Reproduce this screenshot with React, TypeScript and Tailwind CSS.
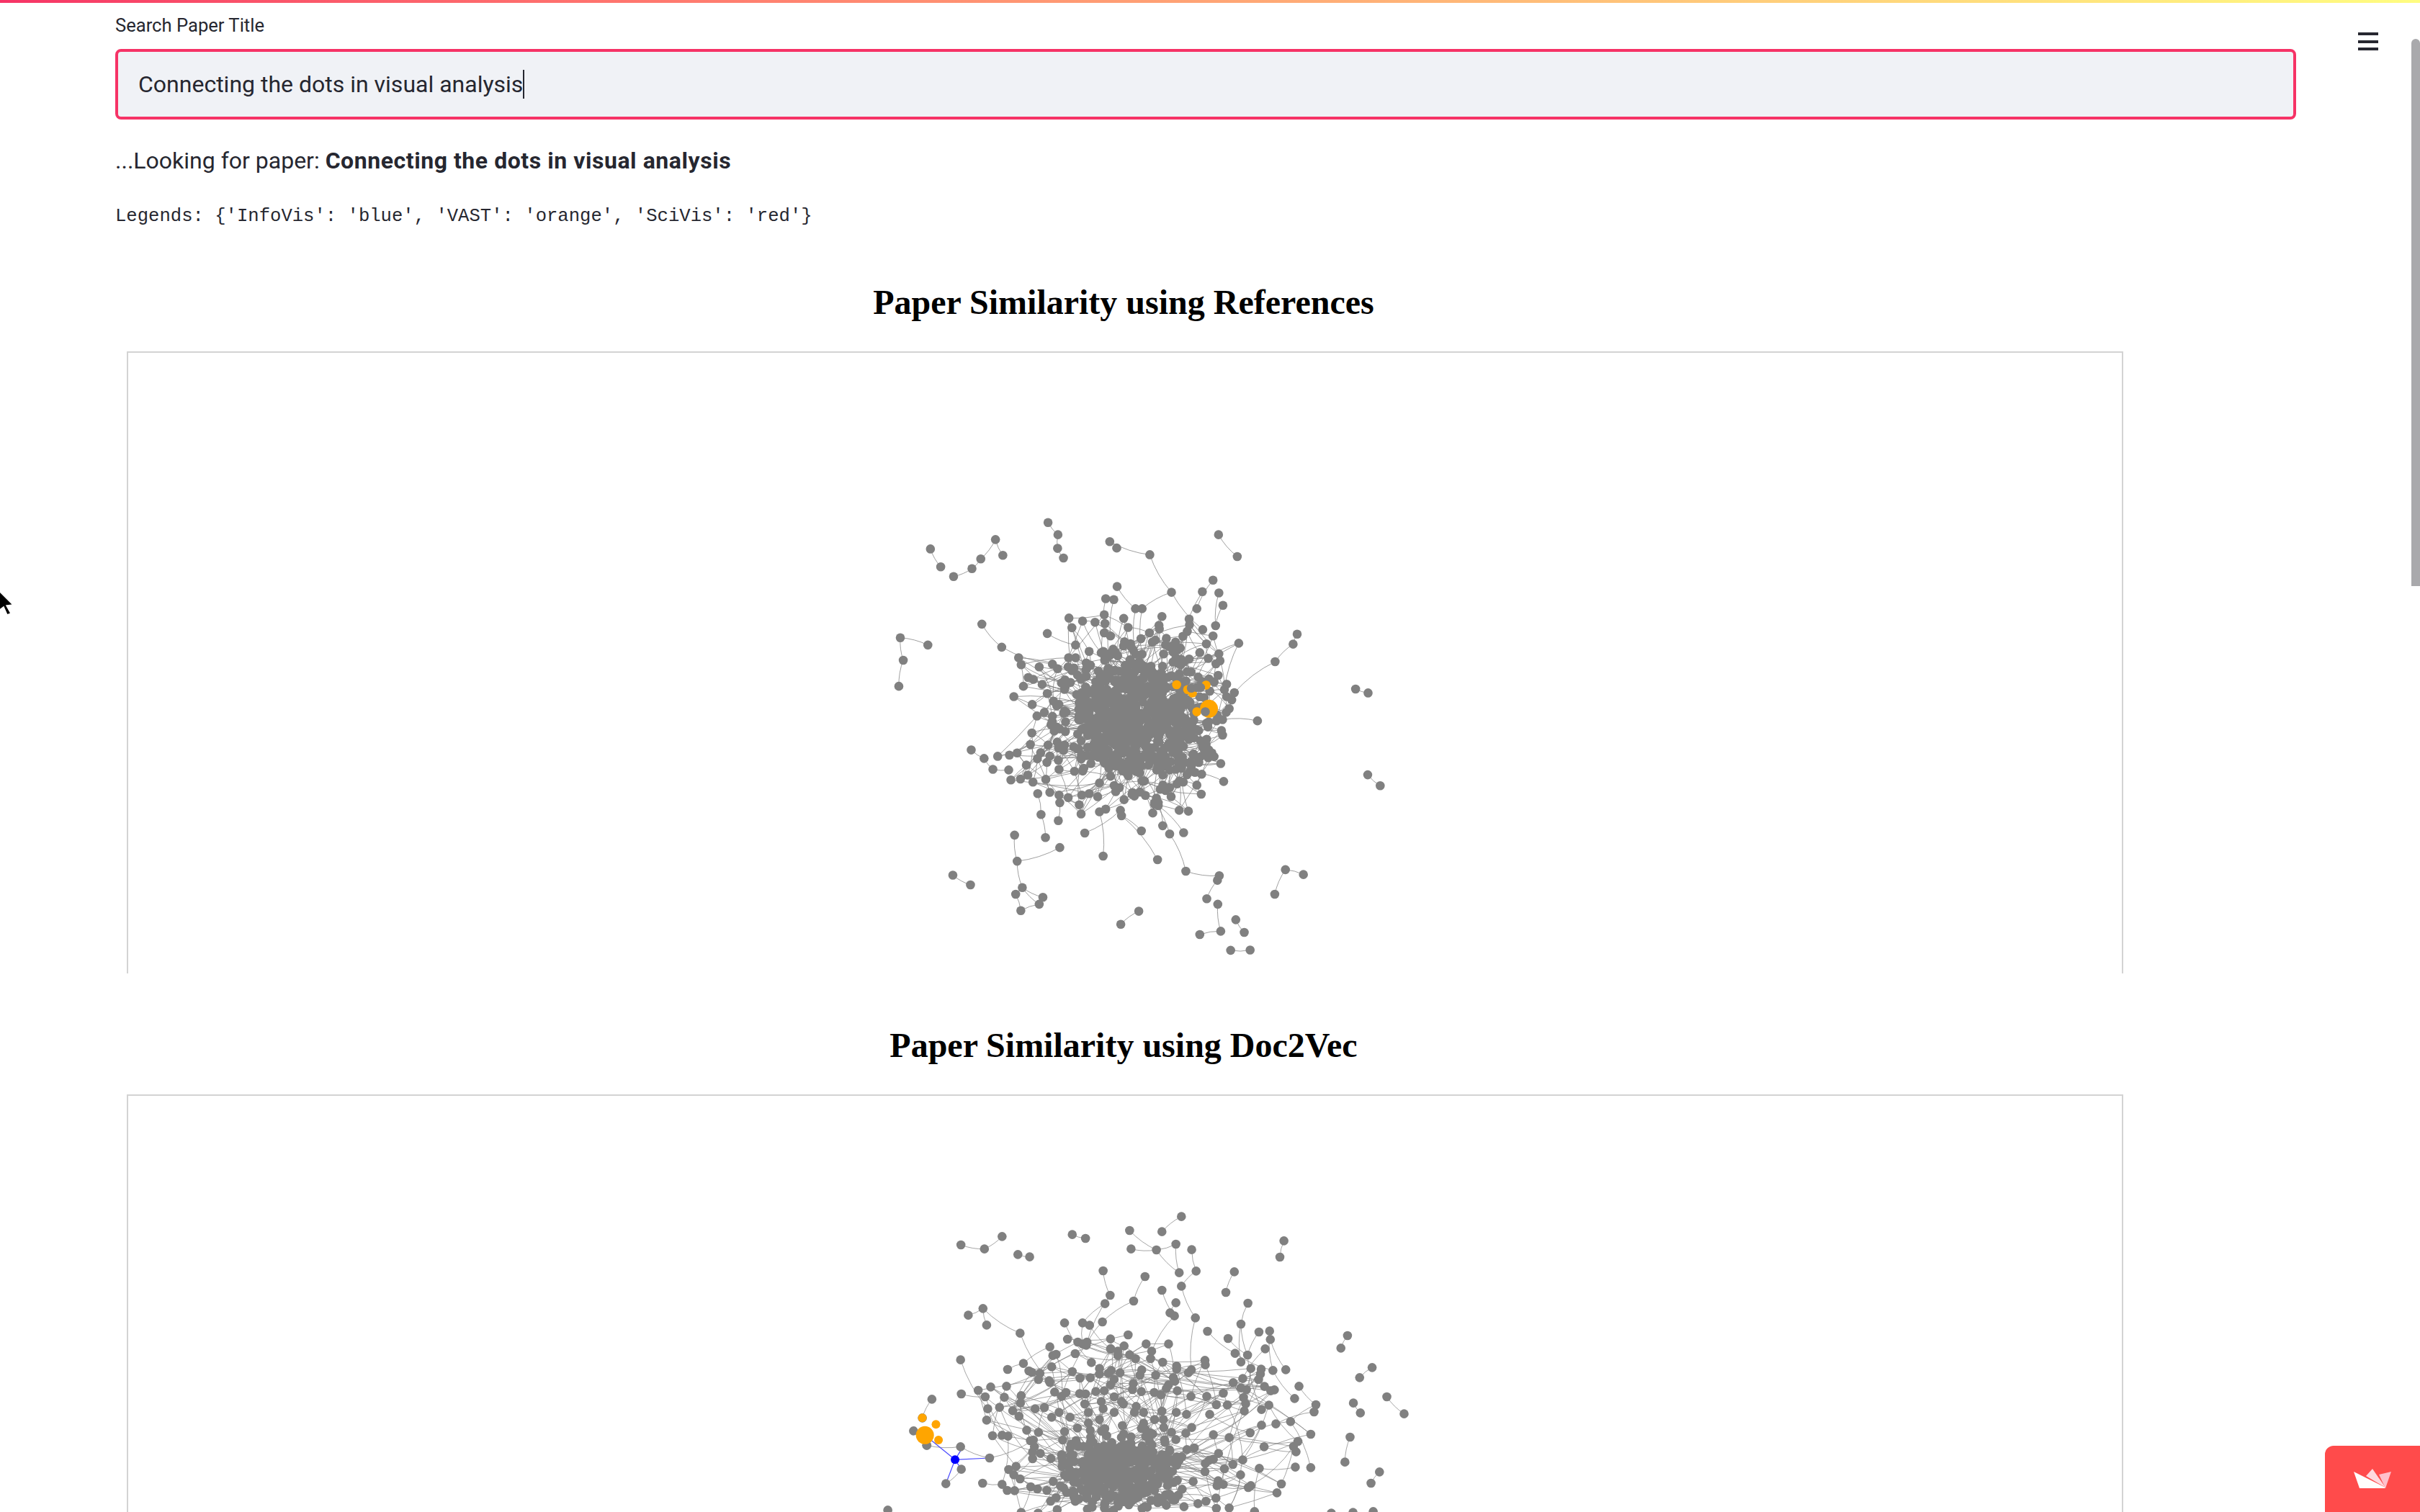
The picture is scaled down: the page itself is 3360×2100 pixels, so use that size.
import React from "react";

type P = [number, number];

function rng(seed: number) {
  let s = seed;
  return () => {
    s = (s * 1664525 + 1013904223) % 4294967296;
    return s / 4294967296;
  };
}

const chains1: P[][] = [
  [[180,153],[208,212]],
  [[243,244],[293,218],[317,186],[357,122],[377,174]],
  [[500,66],[527,106],[526,151],[542,183]],
  [[687,150],[668,129],[777,172],[836,296],[756,350]],
  [[836,296],[921,419]],
  [[688,277],[738,350]],
  [[964,106],[1015,178]],
  [[173,470],[98,446],[106,520],[94,606]],
  [[320,401],[374,477],[512,533]],
  [[949,256],[905,350]],
  [[965,298],[956,406]],
  [[976,339],[956,406]],
  [[1178,434],[1167,467],[1118,525],[1007,627]],
  [[1337,615],[1371,628]],
  [[1370,898],[1404,934]],
  [[1070,720],[975,716]],
  [[291,816],[326,844],[350,880],[393,882]],
  [[409,1097],[416,1183],[532,1138]],
  [[416,1183],[430,1270],[412,1292]],
  [[430,1270],[486,1302],[476,1325],[426,1346],[412,1292]],
  [[430,1270],[476,1325]],
  [[241,1229],[289,1261]],
  [[600,1090],[697,1015]],
  [[650,1166],[640,1020]],
  [[798,1178],[700,1033]],
  [[754,1083],[700,1033]],
  [[812,1066],[800,990]],
  [[875,1216],[831,1093],[790,990]],
  [[875,1216],[966,1231]],
  [[961,1246],[932,1307]],
  [[869,1089],[800,1000]],
  [[1195,1227],[1146,1211],[1117,1292]],
  [[962,1325],[970,1414],[913,1425]],
  [[1011,1376],[1034,1418]],
  [[997,1477],[1050,1476]],
  [[747,1348],[698,1391]],
  [[493,1105],[481,1029],[472,960]],
  [[528,1049],[532,990]],
  [[657,317],[653,430]],
  [[679,320],[670,440]],
  [[738,350],[738,500]],
  [[756,350],[756,500]],
  [[920,294],[860,480]],
  [[498,432],[575,470]],
  [[978,920],[900,890]],
];
const extra1: P[] = [
  [557,381],[565,413],[594,391],[628,395],[653,370],[706,382],[718,412],[655,399],[776,430],[810,376],[802,405],[803,417],[822,448],[753,449],[792,454],[847,460],[849,480],[884,384],[885,403],[879,425],[867,441],[949,440],[931,466],[913,495],[965,499],[968,522],[957,532],[936,514],[884,516],[862,517],[840,526],[1019,464],[963,570],[938,582],[986,599],[952,592],[980,617],[1000,651],[986,640],[993,680],[985,692],[960,700],[935,740],[972,752],[975,767],[910,752],[897,776],[920,792],[930,800],[946,826],[952,838],[936,842],[915,838],[890,870],[918,896],[868,922],[851,928],[848,880],[827,860],[917,962],[905,932],[970,861],[857,1015],[882,1018],
  [420,512],[427,535],[476,542],[526,548],[555,542],[575,512],[556,512],[446,577],[460,583],[433,606],[484,600],[498,630],[407,640],[457,666],[490,692],[470,704],[515,655],[512,705],[508,733],[522,740],[456,760],[452,798],[500,800],[525,790],[480,825],[471,845],[497,857],[505,836],[528,850],[530,880],[363,837],[395,833],[416,826],[441,866],[399,915],[425,912],[445,899],[459,922],[494,913],[505,956],[530,965],[555,973],[585,997],[590,1027],[635,970],[612,960],[592,965],[657,1011],[707,980],[735,968],[765,966],[795,975],[790,995],[785,1024],[835,970],[820,950],
];

const chains2: P[][] = [
  [[263,207],[327,224],[375,172]],
  [[418,247],[450,257]],
  [[566,164],[602,180]],
  [[722,147],[795,228],[857,323]],
  [[726,224],[795,228],[848,204],[857,323]],
  [[863,89],[810,152]],
  [[891,227],[903,316],[863,379],[901,511],[890,728]],
  [[1142,190],[1131,258]],
  [[650,315],[669,417]],
  [[655,452],[594,532]],
  [[669,417],[604,625]],
  [[764,339],[733,441],[648,528],[604,625]],
  [[810,396],[844,503],[782,650]],
  [[848,448],[832,490]],
  [[1007,319],[984,405]],
  [[1044,450],[1025,537],[1043,666]],
  [[1025,537],[1025,695]],
  [[283,500],[323,472],[424,575],[505,780]],
  [[323,472],[333,541]],
  [[545,532],[618,697]],
  [[594,532],[594,620]],
  [[613,542],[670,640]],
  [[934,567],[1009,659],[1112,730],[1171,847]],
  [[990,597],[1043,666]],
  [[1074,570],[1043,666],[1081,893]],
  [[1103,566],[1112,730]],
  [[1105,601],[1147,727]],
  [[1091,640],[1030,764]],
  [[1315,585],[1297,637]],
  [[1382,718],[1348,760]],
  [[1422,840],[1469,911]],
  [[1331,866],[1350,907]],
  [[1322,1008],[1308,1112]],
  [[1402,1153],[1379,1200]],
  [[262,686],[336,890],[375,1000]],
  [[264,828],[329,840],[391,1004]],
  [[170,1042],[262,1048],[341,1095],[460,1020]],
  [[222,1202],[264,1142]],
  [[322,1200],[375,1205],[391,1004]],
  [[1229,873],[1160,943],[1050,990],[950,1100]],
  [[1224,903],[1120,953]],
  [[1183,796],[1229,873]],
  [[1215,1135],[1160,943]],
  [[1088,1048],[1175,1069]],
  [[1075,1138],[1062,1318]],
  [[1075,1138],[1173,1133]],
  [[940,913],[1050,990]],
  [[553,600],[718,582]],
  [[505,632],[433,701],[390,726]],
  [[184,850],[158,928]],
];
const extra2: P[] = [
  [310,813],[344,799],[581,612],[606,612],[670,599],[574,660],[513,668],[522,663],[510,715],[448,732],[456,738],[478,742],[474,768],[503,773],[566,735],[587,762],[615,761],[671,640],[690,650],[690,668],[707,628],[722,665],[738,681],[767,620],[779,681],[812,696],[828,620],[850,712],[850,725],[927,688],[928,707],[882,740],[755,728],[750,750],[793,750],[841,760],[845,775],[828,790],[822,805],[852,815],[807,832],[789,822],[754,818],[732,785],[730,810],[696,740],[672,730],[640,722],[640,745],[664,742],[680,767],[670,790],[653,815],[630,818],[602,828],[586,827],[549,822],[537,838],[518,820],[387,796],[381,842],[427,835],[425,866],[368,884],[404,898],[421,921],[333,937],[349,1002],[442,979],[474,988],[452,1023],[463,1048],[458,1070],[479,1076],[458,1098],[508,1097],[537,1081],[413,1130],[393,1143],[407,1165],[424,1182],[389,1230],[409,1231],[453,1215],[471,1224],[497,1230],[514,1193],[534,1212],[522,1260],[507,1275],[525,1310],[427,1322],[473,1325],
  [889,838],[932,838],[977,825],[1004,781],[1052,722],[1080,725],[1078,745],[1073,768],[1089,797],[1025,803],[1040,810],[1106,815],[1116,811],[1032,843],[1038,869],[988,874],[958,873],[1034,899],[1101,875],[1081,958],[993,1010],[950,998],[891,968],[1215,996],[1180,1026],[1168,1047],[964,1076],[1030,1103],[1003,1122],[980,1140],[938,1105],[928,1118],[927,1152],[1024,1165],[1135,1203],[1123,1240],[1052,1210],[1045,1218],[977,1205],[960,1210],[963,1190],[895,1193],[957,1262],[930,1275],[908,1285],[993,1303],[958,1305],[870,1298],[840,1270],
  [877,913],[849,905],[814,935],[815,968],[785,995],[836,988],[848,1018],[875,992],[817,1020],[878,1060],[898,1053],[864,1090],[850,1125],[822,1140],[825,1170],[825,1210],[842,1197],[865,1225],[855,1250],[830,1245],[845,1270],[822,1292],
  [700,860],[740,880],[760,905],[650,890],[610,905],[545,985],[580,970],[615,980],[560,925],[510,925],[530,905],[465,890],[490,885],[600,870],[645,860],[680,840],[705,870],[735,905],[680,905],[640,935],[610,950],[760,950],[790,935],[810,900],[580,1040],[560,1055],[540,1020],[565,1110],[545,1165],[570,1195],[590,1225],[570,1245],[605,1262],[655,1282],[690,1280],[720,1290],[770,1300],[800,1260],[790,1230],[620,1300],
];
const farOnly2: P[] = [[64,1312],[1271,1325],[1330,1322],[1385,1318]];

type Graph = {
  chains: P[][];
  extra: P[];
  far: P[];
  sx: number;
  sy: number;
  oy: number;
  cx: number;
  cy: number;
  rx: number;
  ry: number;
  core: number;
  dense: number;
  denseK: number;
  seed: number;
};

function build(g: Graph) {
  const r = rng(g.seed);
  const map = (p: P): P => [1200 + p[0] / g.sx, g.oy + p[1] / g.sy];
  const corePts: P[] = [];
  for (let i = 0; i < g.core; i++) {
    const a = r() * Math.PI * 2;
    const d = Math.pow(r(), 0.55);
    corePts.push([g.cx + Math.cos(a) * d * g.rx, g.cy + Math.sin(a) * d * g.ry]);
  }
  for (let i = 0; i < g.dense; i++) {
    const a = r() * Math.PI * 2;
    const d = Math.pow(r(), 0.55) * g.denseK;
    corePts.push([g.cx + Math.cos(a) * d * g.rx, g.cy + Math.sin(a) * d * g.ry]);
  }
  const paths: string[] = [];
  const curve = (a: P, b: P, k: number) => {
    const A = map(a);
    const B = map(b);
    const mx = (A[0] + B[0]) / 2 - (B[1] - A[1]) * k;
    const my = (A[1] + B[1]) / 2 + (B[0] - A[0]) * k;
    return `M${A[0].toFixed(1)} ${A[1].toFixed(1)}Q${mx.toFixed(1)} ${my.toFixed(1)} ${B[0].toFixed(1)} ${B[1].toFixed(1)}`;
  };
  g.chains.forEach((c) => {
    for (let i = 0; i < c.length - 1; i++) paths.push(curve(c[i], c[i + 1], 0.1));
  });
  const inner = [...corePts, ...g.extra];
  const norm = (p: P) => Math.hypot((p[0] - g.cx) / g.rx, (p[1] - g.cy) / g.ry);
  inner.forEach((p) => {
    const dp = norm(p);
    const near = inner
      .filter((q) => q !== p && norm(q) < dp)
      .map((q) => ({ q, d: Math.hypot(q[0] - p[0], q[1] - p[1]) }))
      .sort((a, b) => a.d - b.d);
    if (near.length === 0) return;
    for (let j = 0; j < 3; j++) {
      const idx = Math.floor(r() * Math.min(near.length, j === 0 ? 6 : 40));
      paths.push(curve(p, near[idx].q, (r() - 0.5) * 0.25));
    }
  });
  const pts: P[] = [];
  const seen = new Set<string>();
  [...g.chains.flat(), ...g.extra, ...g.far, ...corePts].forEach((p) => {
    const k = p.join(",");
    if (!seen.has(k)) {
      seen.add(k);
      pts.push(map(p));
    }
  });
  return { d: paths.join(""), pts };
}

const g1 = build({ chains: chains1, extra: extra1, far: [], sx: 1.96, sy: 2.375, oy: 698, cx: 735, cy: 708, rx: 225, ry: 260, core: 300, dense: 420, denseK: 0.72, seed: 7 });
const g2 = build({ chains: chains2, extra: extra2, far: farOnly2, sx: 1.96, sy: 3, oy: 1660, cx: 700, cy: 1150, rx: 175, ry: 190, core: 170, dense: 200, denseK: 0.65, seed: 21 });

const m1 = (x: number, y: number): P => [1200 + x / 1.96, 698 + y / 2.375];
const m2 = (x: number, y: number): P => [1200 + x / 1.96, 1660 + y / 3];

function Dot({ p, r, fill }: { p: P; r: number; fill: string }) {
  return <circle cx={p[0]} cy={p[1]} r={r} fill={fill} />;
}

function Graph1() {
  const on: P[] = [[890, 612], [905, 610], [928, 690], [915, 610]];
  return (
    <svg className="block w-full h-full" viewBox="178 490 2768 862" preserveAspectRatio="xMinYMin slice">
      <path d={g1.d} fill="none" stroke="#808080" strokeOpacity={0.75} strokeWidth={1} />
      {g1.pts.map((p, i) => (
        <Dot key={i} p={p} r={6.3} fill="#808080" />
      ))}
      <Dot p={m1(850, 601)} r={6.3} fill="#ffa500" />
      <Dot p={m1(880, 617)} r={6.3} fill="#ffa500" />
      <Dot p={m1(893, 628)} r={6.3} fill="#ffa500" />
      <Dot p={m1(930, 602)} r={6.3} fill="#ffa500" />
      <Dot p={m1(905, 690)} r={6.3} fill="#ffa500" />
      <Dot p={m1(938, 680)} r={12.5} fill="#ffa500" />
      {on.map((q, i) => (
        <Dot key={i} p={m1(q[0], q[1])} r={6.3} fill="#808080" />
      ))}
    </svg>
  );
}

function Graph2() {
  const blue = m2(247, 1102);
  const bl: P[] = [m2(165, 1000), m2(341, 1095), m2(264, 1060), m2(264, 1142), m2(222, 1202)];
  return (
    <svg className="block w-full h-full" viewBox="178 1522 2768 578" preserveAspectRatio="xMinYMin slice">
      <path d={g2.d} fill="none" stroke="#808080" strokeOpacity={0.7} strokeWidth={1} />
      {bl.map((q, i) => (
        <line key={i} x1={blue[0]} y1={blue[1]} x2={q[0]} y2={q[1]} stroke="#4a4aff" strokeWidth={1.2} />
      ))}
      {g2.pts.map((p, i) => (
        <Dot key={i} p={p} r={6.3} fill="#808080" />
      ))}
      <Dot p={m2(134, 982)} r={6.3} fill="#808080" />
      <Dot p={m2(170, 1042)} r={6.3} fill="#808080" />
      <Dot p={m2(158, 928)} r={6} fill="#ffa500" />
      <Dot p={m2(195, 955)} r={6} fill="#ffa500" />
      <Dot p={m2(202, 1020)} r={6} fill="#ffa500" />
      <Dot p={m2(165, 1000)} r={12.5} fill="#ffa500" />
      <Dot p={blue} r={6} fill="#0000ff" />
    </svg>
  );
}

export default function App() {
  return (
    <div className="relative w-[3360px] h-[2100px] overflow-hidden bg-white flex flex-col text-[#262730] font-['Roboto',sans-serif]">
      <div className="h-1 shrink-0 bg-gradient-to-r from-[#f63366] to-[#fffd80]" />
      <main className="flex-1 min-h-0 flex flex-col pl-40 w-[3188px]">
        <div className="h-[62px] leading-[62px] text-[25.6px]">Search Paper Title</div>
        <div className="mt-[2px] h-[98px] shrink-0 rounded-lg border-4 border-[#f63366] bg-[#f0f2f6] flex items-center pl-7 text-[32px]">
          <span>Connecting the dots in visual analysis</span>
          <span className="inline-block w-[2px] h-10 bg-[#262730]" />
        </div>
        <p className="mt-[37px] h-10 leading-10 text-[32px]">
          ...Looking for paper: <strong className="font-bold tracking-[0.55px]">Connecting the dots in visual analysis</strong>
        </p>
        <pre className="mt-[38px] h-10 leading-10 text-[25.6px] font-['Liberation_Mono',monospace]">
          {"Legends: {'InfoVis': 'blue', 'VAST': 'orange', 'SciVis': 'red'}"}
        </pre>
        <div className="flex-1 min-h-0 w-[2800px] flex flex-col">
          <h1 className="mt-[69px] h-[60px] leading-[60px] text-center text-[48px] font-bold text-black font-['Liberation_Serif',serif]">
            Paper Similarity using References
          </h1>
          <div className="ml-4 mt-[38px] w-[2772px] h-[864px] shrink-0 border-2 border-b-0 border-[#d3d3d3] overflow-hidden">
            <Graph1 />
          </div>
          <h1 className="mt-[70px] h-[60px] leading-[60px] text-center text-[48px] font-bold text-black font-['Liberation_Serif',serif]">
            Paper Similarity using Doc2Vec
          </h1>
          <div className="ml-4 mt-[38px] w-[2772px] flex-1 min-h-0 border-2 border-b-0 border-[#d3d3d3] overflow-hidden">
            <Graph2 />
          </div>
        </div>
      </main>

      <div className="absolute left-[3274px] top-[45px] w-7 h-[25px] flex flex-col justify-between">
        <div className="h-1 bg-[#262730]" />
        <div className="h-1 bg-[#262730]" />
        <div className="h-1 bg-[#262730]" />
      </div>

      <div className="absolute right-0 top-[54px] w-3 h-[760px] rounded-t-md bg-[#a9a9ac]" />

      <div className="absolute right-0 bottom-0 w-[132px] h-[92px] rounded-tl-xl bg-[#ff4b4b]">
        <svg className="absolute left-10 top-8" width="52" height="28" viewBox="0 0 52 28">
          <polygon points="17,10 26,0 44,26" fill="#ffd9df" />
          <polygon points="35,8 52,4 44,27" fill="#ffc0cc" />
          <polygon points="0,4 44,26 43,27 8,27" fill="#fffdfb" />
        </svg>
      </div>

      <svg className="absolute left-0 top-[815px]" width="22" height="42" viewBox="0 0 22 42">
        <polygon points="-3,4 18,25 9,26 15,37 10,39 5,28 -3,34" fill="#000" stroke="#fff" strokeWidth={1.5} />
      </svg>
    </div>
  );
}
